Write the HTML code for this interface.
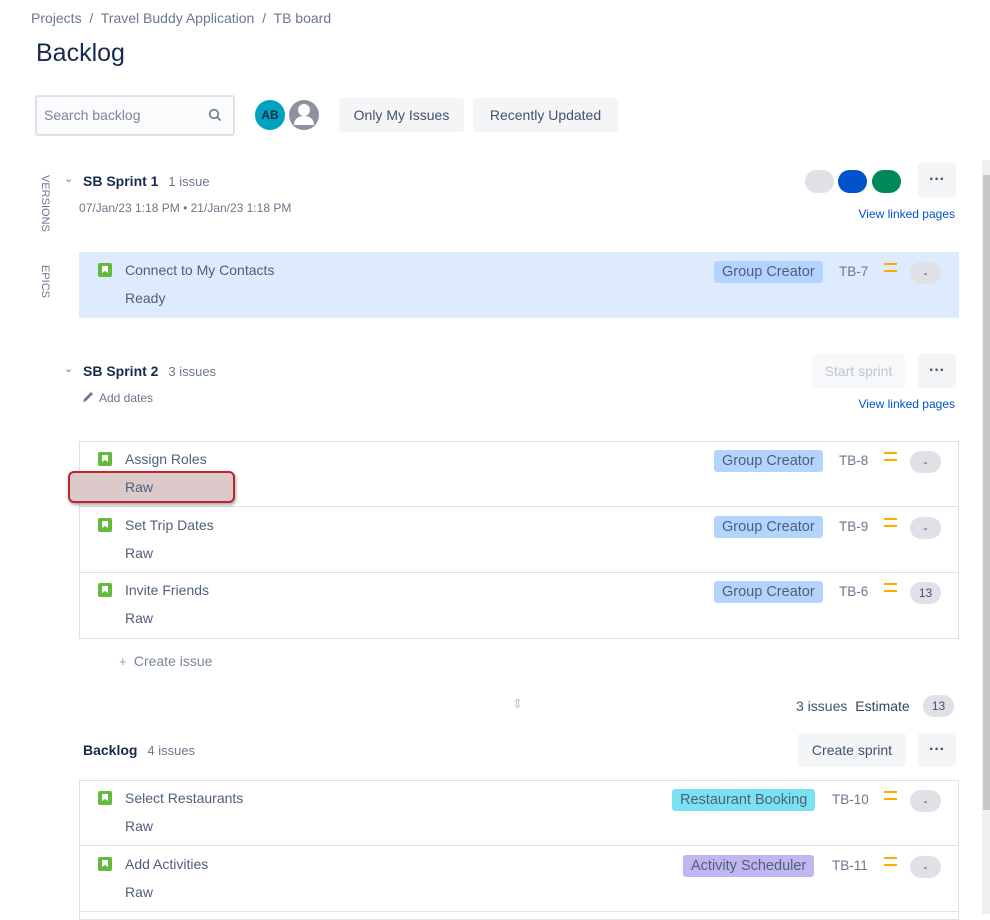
<!DOCTYPE html>
<html><head><meta charset="utf-8"><style>
*{box-sizing:border-box;margin:0;padding:0}
body{width:990px;height:914px;overflow:hidden;background:#fff;font-family:"Liberation Sans",sans-serif;color:#42526e;position:relative;font-size:14px}
.a{position:absolute;white-space:nowrap}
.btn{position:absolute;background:#f4f5f7;border-radius:3px;display:flex;align-items:center;justify-content:center;color:#42526e;font-size:14px}
.dots{font-size:16px;font-weight:bold;letter-spacing:0px;color:#42526e}
.row{position:absolute;left:79px;width:880px;height:66px;border-bottom:1px solid #dfe1e6}
.ic{position:absolute;left:19px;top:11px;width:14px;height:14px;background:#63ba3c;border-radius:2px}
.ic:after{content:"";position:absolute;left:4px;top:3px;width:6px;height:7px;background:#fff;clip-path:polygon(0 0,100% 0,100% 100%,50% 70%,0 100%)}
.tt{position:absolute;left:46px;top:10px;font-size:14px;color:#505f79}
.st{position:absolute;left:46px;top:38px;font-size:14px;color:#505f79}
.lb{position:absolute;top:9px;height:22px;line-height:22px;padding:0 8px;border-radius:3px;font-size:14.5px;color:#505f79}
.key{position:absolute;top:12px;font-size:13.5px;color:#6b778c}
.pri{position:absolute;top:11px;width:13px;height:9px;border-top:2px solid #ffab00;border-bottom:2px solid #ffab00}
.pill{position:absolute;top:10px;width:31px;height:22px;border-radius:11px;background:#dfe1e6;font-size:12px;text-align:center;line-height:22px;color:#42526e}
.link{position:absolute;font-size:12px;color:#0052cc;right:35px}
</style></head><body>
<div class="a" style="left:31px;top:10px;font-size:14px;color:#6b778c">Projects &nbsp;/&nbsp; Travel Buddy Application &nbsp;/&nbsp; TB board</div>
<div class="a" style="left:36px;top:39px;font-size:25px;color:#172b4d">Backlog</div>
<div class="a" style="left:35px;top:95px;width:200px;height:41px;border:2px solid #dfe1e6;border-radius:3px;background:#fafbfc"></div>
<div class="a" style="left:44px;top:107px;font-size:14px;color:#7a869a">Search backlog</div>
<svg class="a" style="left:208px;top:108px" width="14" height="14" viewBox="0 0 14 14"><circle cx="6" cy="6" r="4.3" fill="none" stroke="#6b778c" stroke-width="1.6"/><line x1="9.2" y1="9.2" x2="12.5" y2="12.5" stroke="#6b778c" stroke-width="1.6"/></svg>
<div class="a" style="left:253px;top:98px;width:34px;height:34px;border-radius:50%;background:#00a3bf;border:2px solid #fff;color:#172b4d;font-size:12px;font-weight:bold;text-align:center;line-height:30px">AB</div>
<svg class="a" style="left:286px;top:97px" width="36" height="36" viewBox="0 0 36 36"><circle cx="18" cy="18" r="17" fill="#fff"/><circle cx="18" cy="18" r="15" fill="#8993a4"/><circle cx="18" cy="13" r="6" fill="#fff"/><path d="M8 28c0-6 4-9 10-9s10 3 10 9z" fill="#fff"/></svg>
<div class="btn" style="left:339px;top:98px;width:125px;height:34px">Only My Issues</div>
<div class="btn" style="left:473px;top:98px;width:145px;height:34px">Recently Updated</div>
<div class="a" style="left:37px;top:175px;font-size:11px;color:#6b778c;transform-origin:0 0;transform:translate(14px,0) rotate(90deg)">VERSIONS</div>
<div class="a" style="left:37px;top:265px;font-size:11px;color:#6b778c;transform-origin:0 0;transform:translate(14px,0) rotate(90deg)">EPICS</div>
<div class="a" style="left:64px;top:172px;font-size:11px;color:#6b778c">&#8964;</div>
<div class="a" style="left:83px;top:173px;font-size:14px;font-weight:bold;color:#172b4d">SB Sprint 1 <span style="font-weight:normal;color:#6b778c;margin-left:6px;font-size:13px">1 issue</span></div>
<div class="a" style="left:79px;top:201px;font-size:12px;color:#6b778c">07/Jan/23 1:18 PM &bull; 21/Jan/23 1:18 PM</div>
<div class="a" style="left:805px;top:170px;width:29px;height:23px;border-radius:12px;background:#dfe1e6"></div>
<div class="a" style="left:838px;top:170px;width:29px;height:23px;border-radius:12px;background:#0052cc"></div>
<div class="a" style="left:872px;top:170px;width:29px;height:23px;border-radius:12px;background:#00875a"></div>
<div class="btn dots" style="left:918px;top:163px;width:38px;height:34px">&middot;&middot;&middot;</div>
<div class="link" style="top:207px">View linked pages</div>
<div class="row" style="top:252px;background:#deebff;border:none">
<div class="ic"></div><div class="tt">Connect to My Contacts</div><div class="st">Ready</div>
<div class="lb" style="left:635px;background:#b3d4ff">Group Creator</div><div class="key" style="left:760px">TB-7</div><div class="pri" style="left:805px"></div><div class="pill" style="left:831px">-</div>
</div>
<div class="a" style="left:64px;top:362px;font-size:11px;color:#6b778c">&#8964;</div>
<div class="a" style="left:83px;top:363px;font-size:14px;font-weight:bold;color:#172b4d">SB Sprint 2 <span style="font-weight:normal;color:#6b778c;margin-left:6px;font-size:13px">3 issues</span></div>
<svg class="a" style="left:81px;top:390px" width="14" height="14" viewBox="0 0 14 14"><path d="M2 12l1-3 7-7 2 2-7 7z" fill="#6b778c"/></svg>
<div class="a" style="left:99px;top:391px;font-size:12px;color:#6b778c">Add dates</div>
<div class="btn" style="left:812px;top:354px;width:93px;height:34px;background:#f7f8f9;color:#c1c7d0">Start sprint</div>
<div class="btn dots" style="left:918px;top:354px;width:38px;height:34px">&middot;&middot;&middot;</div>
<div class="link" style="top:397px">View linked pages</div>
<div class="a" style="left:79px;top:441px;width:880px;height:198px;border:1px solid #dfe1e6"></div>
<div class="row" style="top:441px"><div class="ic"></div><div class="tt">Assign Roles</div>
<div class="lb" style="left:635px;background:#b3d4ff">Group Creator</div><div class="key" style="left:760px">TB-8</div><div class="pri" style="left:805px"></div><div class="pill" style="left:831px">-</div></div>
<div class="a" style="left:68px;top:471px;width:167px;height:32px;border:2.5px solid #c0232c;border-radius:6px;background:#dcc9c9;box-shadow:1px 2px 3px rgba(0,0,0,.35)"></div>
<div class="a" style="left:125px;top:479px;font-size:14px;color:#505f79">Raw</div>
<div class="row" style="top:507px"><div class="ic"></div><div class="tt">Set Trip Dates</div><div class="st">Raw</div>
<div class="lb" style="left:635px;background:#b3d4ff">Group Creator</div><div class="key" style="left:760px">TB-9</div><div class="pri" style="left:805px"></div><div class="pill" style="left:831px">-</div></div>
<div class="row" style="top:572px;border:none"><div class="ic"></div><div class="tt">Invite Friends</div><div class="st">Raw</div>
<div class="lb" style="left:635px;background:#b3d4ff">Group Creator</div><div class="key" style="left:760px">TB-6</div><div class="pri" style="left:805px"></div><div class="pill" style="left:831px">13</div></div>
<div class="a" style="left:119px;top:653px;font-size:13px;color:#97a0af">+ &nbsp;<span style="font-size:14px;color:#7a869a">Create issue</span></div>
<div class="a" style="left:512px;top:696px;font-size:13px;color:#c1c7d0">&#8661;</div>
<div class="a" style="left:796px;top:698px;font-size:14px;color:#42526e">3 issues <span style="color:#344563;margin-left:4px">Estimate</span></div>
<div class="a" style="left:923px;top:695px;width:31px;height:22px;border-radius:11px;background:#dfe1e6;font-size:12px;text-align:center;line-height:22px">13</div>
<div class="a" style="left:83px;top:742px;font-size:14px;font-weight:bold;color:#172b4d">Backlog <span style="font-weight:normal;color:#6b778c;margin-left:6px;font-size:13px">4 issues</span></div>
<div class="btn" style="left:798px;top:733px;width:108px;height:34px">Create sprint</div>
<div class="btn dots" style="left:918px;top:733px;width:38px;height:34px">&middot;&middot;&middot;</div>
<div class="a" style="left:79px;top:780px;width:880px;height:140px;border:1px solid #dfe1e6"></div>
<div class="row" style="top:780px"><div class="ic"></div><div class="tt">Select Restaurants</div><div class="st">Raw</div>
<div class="lb" style="left:593px;background:#79e2f2">Restaurant Booking</div><div class="key" style="left:753px">TB-10</div><div class="pri" style="left:805px"></div><div class="pill" style="left:831px">-</div></div>
<div class="row" style="top:846px"><div class="ic"></div><div class="tt">Add Activities</div><div class="st">Raw</div>
<div class="lb" style="left:604px;background:#c0b6f2">Activity Scheduler</div><div class="key" style="left:753px">TB-11</div><div class="pri" style="left:805px"></div><div class="pill" style="left:831px">-</div></div>
<div class="a" style="left:982px;top:160px;width:8px;height:754px;background:#f0f0f0"></div>
<div class="a" style="left:983px;top:175px;width:7px;height:635px;background:#c8c8c8"></div>
</body></html>
